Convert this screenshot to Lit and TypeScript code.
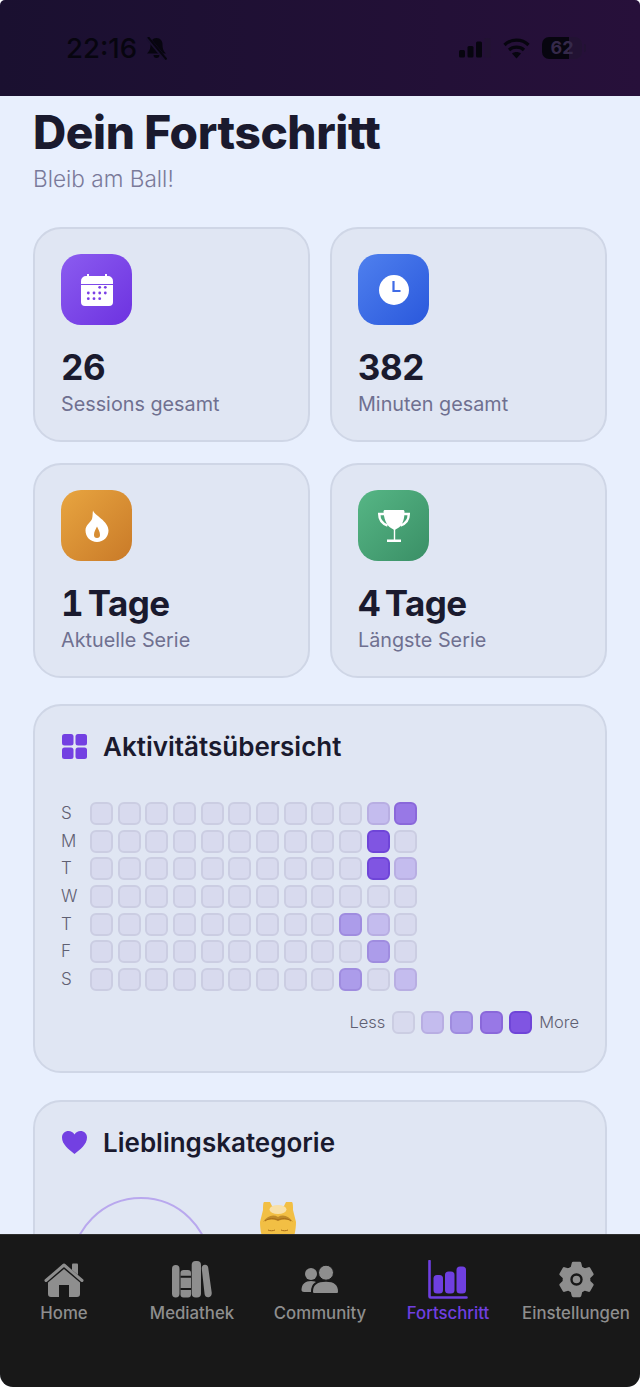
import { LitElement, html, css, svg } from "lit";
import { customElement } from "lit/decorators.js";

// levels per weekday row, 12 columns
const HEAT: [string, number[]][] = [
  ["S", [0, 0, 0, 0, 0, 0, 0, 0, 0, 0, 1, 3]],
  ["M", [0, 0, 0, 0, 0, 0, 0, 0, 0, 0, 4, 0]],
  ["T", [0, 0, 0, 0, 0, 0, 0, 0, 0, 0, 4, 1]],
  ["W", [0, 0, 0, 0, 0, 0, 0, 0, 0, 0, 0, 0]],
  ["T", [0, 0, 0, 0, 0, 0, 0, 0, 0, 2, 1, 0]],
  ["F", [0, 0, 0, 0, 0, 0, 0, 0, 0, 0, 2, 0]],
  ["S", [0, 0, 0, 0, 0, 0, 0, 0, 0, 2, 0, 1]],
];

const gear = () => {
  const pts: string[] = [];
  for (let i = 0; i < 6; i++) {
    const a = (i * Math.PI) / 3 - Math.PI / 2;
    const at = (r: number, d: number) =>
      `${(18.5 + r * Math.cos(a + d)).toFixed(2)} ${(18.5 + r * Math.sin(a + d)).toFixed(2)}`;
    pts.push(at(12.5, -0.36), at(16.5, -0.2), at(16.5, 0.2), at(12.5, 0.36));
  }
  return `M${pts.join("L")}Z`;
};

const ICONS = {
  calendar: svg`<path d="M6 0h2v2h16V0h2v2h1a5 5 0 0 1 5 5v3H0V7a5 5 0 0 1 5-5h1z" fill="#fff"/><path d="M0 11h32v17a4 4 0 0 1-4 4H4a4 4 0 0 1-4-4z" fill="#fff"/><g fill="#7a3fe6"><circle cx="18.700" cy="13.300" r="1.400"/><circle cx="24.300" cy="13.300" r="1.400"/><circle cx="7.300" cy="19" r="1.400"/><circle cx="13" cy="19" r="1.400"/><circle cx="18.700" cy="19" r="1.400"/><circle cx="24.300" cy="19" r="1.400"/><circle cx="7.300" cy="24.700" r="1.400"/><circle cx="13" cy="24.700" r="1.400"/><circle cx="18.700" cy="24.700" r="1.400"/></g>`,
  clock: svg`<circle cx="16" cy="16" r="15" fill="#fff"/><path d="M15.500 7v10h7" fill="none" stroke="#3f6be6" stroke-width="2.200"/>`,
  flame: svg`<path fill-rule="evenodd" d="M12 .5C13 5 27.500 11 27.500 20.500 27.500 27 22.500 32 16 32S4.500 27 4.500 20.500C4.500 15 9 13 11 9 11.800 6.500 11.500 3 12 .5zM16 16.500c-1.500 3-3 5.500-3 8.500a3 3 0 0 0 6 0c0-3-1.500-5.500-3-8.500z" fill="#fff"/>`,
  trophy: svg`<path d="M7 0h18c.8 0 1.500.7 1.500 1.500 0 7-1.500 12.500-5 15.500-2 1.500-3.800 2-4.300 3v9.500H23V32H9v-2.500h6.800V20c-.5-1-2.300-1.500-4.300-3C8 14 6 8.500 5.500 1.500 5.500.7 6.200 0 7 0z" fill="#fff"/><path d="M6 4H1.200c0 5 2.500 9.500 8.300 11.500M26 4h4.800c0 5-2.500 9.500-8.300 11.500" fill="none" stroke="#fff" stroke-width="2.400"/>`,
};

const STATS = [
  { value: "26", label: "Sessions gesamt", tone: "purple", icon: ICONS.calendar },
  { value: "382", label: "Minuten gesamt", tone: "blue", icon: ICONS.clock },
  { value: "1 Tage", label: "Aktuelle Serie", tone: "orange", icon: ICONS.flame },
  { value: "4 Tage", label: "Längste Serie", tone: "green", icon: ICONS.trophy },
];

const NAV = [
  {
    label: "Home",
    w: 40,
    h: 37,
    icon: svg`<path d="M28 3.500a1 1 0 0 1 1-1h4a1 1 0 0 1 1 1V14l-6-5z" fill="currentColor"/><path d="M2 19.500 20 4l18 15.500" fill="none" stroke="currentColor" stroke-width="3" stroke-linecap="round" stroke-linejoin="round"/><path d="M4 21.500 20 8l16 13.500V33a3 3 0 0 1-3 3h-8V24H15v12H7a3 3 0 0 1-3-3z" fill="currentColor"/>`,
  },
  {
    label: "Mediathek",
    w: 40,
    h: 37,
    icon: svg`<rect x="0" y="4" width="7.500" height="32.500" rx="3.700" fill="currentColor"/><rect x="8.500" y="9" width="10.500" height="27.500" rx="3" fill="currentColor"/><path d="M8.500 15.700h10.500M8.500 28h10.500" stroke="#181818" stroke-width="2"/><rect x="19.700" y="0" width="9.300" height="36.500" rx="4" fill="currentColor"/><path d="M29.800 8c-.3-2.500 1-4 3-4.200 1.800-.2 3 .8 3.400 2.800l3.500 25c.3 2.300-1 4.300-3 4.700-2.200.4-3.700-1-4.100-3z" fill="currentColor"/>`,
  },
  {
    label: "Community",
    w: 39,
    h: 29,
    icon: svg`<circle cx="10" cy="9" r="6" fill="currentColor"/><path d="M.5 25c0-6 4-9 9.500-9s9.500 3 9.500 9c0 1-.5 2-2 2H3c-1.500 0-2.500-1-2.500-2z" fill="currentColor"/><path d="M11 26.500c0-7.500 6-10.700 14-10.700s13 3.200 13 10.700c0 1.500-1 2.500-2 2.500H13c-1 0-2-1-2-2.500z" fill="currentColor" stroke="#181818" stroke-width="2"/><circle cx="25" cy="7.700" r="7.500" fill="currentColor" stroke="#181818" stroke-width="1"/>`,
  },
  {
    label: "Fortschritt",
    w: 40,
    h: 39,
    active: true,
    icon: svg`<path d="M1.500 1v35.500a1 1 0 0 0 1 1h36" fill="none" stroke="currentColor" stroke-width="2.600" stroke-linecap="round"/><rect x="5.500" y="15" width="9.500" height="18.500" rx="3.500" fill="currentColor"/><rect x="17" y="11.500" width="9.500" height="22" rx="3.500" fill="currentColor"/><rect x="28.500" y="6.500" width="9.500" height="27" rx="3.500" fill="currentColor"/>`,
  },
  {
    label: "Einstellungen",
    w: 37,
    h: 37,
    icon: svg`<path d="${gear()}" fill="currentColor" stroke="currentColor" stroke-width="3" stroke-linejoin="round"/><circle cx="18.500" cy="18.500" r="5" fill="currentColor" stroke="#181818" stroke-width="2.400"/>`,
  },
];

@customElement("app-root")
export class AppRoot extends LitElement {
  static styles = css`
    :host {
      display: flex;
      flex-direction: column;
      height: 1387px;
      overflow: hidden;
      background: #e8effd;
      border-radius: 5px 5px 13px 13px;
      font-family: Inter, "Liberation Sans", sans-serif;
      color: #1a1a2e;
    }

    .status {
      flex: none;
      height: 96px;
      box-sizing: border-box;
      padding: 0 54px 0 66px;
      display: flex;
      align-items: center;
      justify-content: space-between;
      background: linear-gradient(90deg, #1a1030, #27103a);
      color: #07050f;
    }
    .status-side {
      display: flex;
      align-items: center;
      gap: 9px;
    }
    .status-right {
      gap: 12px;
    }
    .time {
      font-size: 27.5px;
      font-weight: 500;
    }
    .battery {
      width: 40px;
      height: 22px;
      border-radius: 7px;
      background: linear-gradient(90deg, #07050f 68%, #221233 68%);
      font-size: 18px;
      font-weight: 700;
      line-height: 22px;
      text-align: center;
      color: #35294a;
    }
    .battery-nub {
      width: 2px;
      height: 8px;
      margin-left: -10px;
      border-radius: 0 2px 2px 0;
      background: #221233;
    }

    main {
      flex: 1;
      min-height: 0;
      overflow: hidden;
      padding: 10px 33px 0;
    }
    h1 {
      margin: 0;
      font-size: 46px;
      line-height: 52px;
      font-weight: 800;
      letter-spacing: -0.4px;
    }
    .sub {
      margin: 6px 0 0;
      font-size: 22.6px;
      line-height: 30px;
      font-weight: 300;
      color: #7a7a9a;
    }

    .stats {
      display: grid;
      grid-template-columns: 1fr 1fr;
      gap: 21px 20px;
      margin-top: 33px;
    }
    .card {
      box-sizing: border-box;
      border: 2px solid #cfd6e6;
      border-radius: 28px;
      background: #e0e6f3;
    }
    .stat {
      height: 215px;
      padding: 25px 26px;
    }
    .stat-icon {
      width: 71px;
      height: 71px;
      border-radius: 20px;
      display: flex;
      align-items: center;
      justify-content: center;
    }
    .stat-icon svg {
      width: 32px;
      height: 32px;
    }
    .purple {
      background: linear-gradient(135deg, #8b5cf0, #6d32e0);
    }
    .blue {
      background: linear-gradient(135deg, #4f80ee, #2a58dc);
    }
    .orange {
      background: linear-gradient(135deg, #e8a540, #c97a28);
    }
    .green {
      background: linear-gradient(135deg, #56b685, #3a8f66);
    }
    .value {
      margin-top: 20px;
      font-size: 35px;
      line-height: 44px;
      font-weight: 700;
      font-feature-settings: "tnum";
      letter-spacing: -0.6px;
      word-spacing: -4px;
    }
    .label {
      margin-top: 3px;
      font-size: 19.8px;
      line-height: 24px;
      color: #6f7090;
    }

    .panel {
      margin-top: 27px;
      padding: 24px 26px;
    }
    .activity {
      height: 369px;
      margin-top: 26px;
    }
    .panel-head {
      display: flex;
      align-items: center;
      gap: 15px;
      height: 32px;
      font-size: 26px;
      font-weight: 600;
    }
    .panel-head svg {
      width: 27px;
      height: 27px;
    }
    .heat {
      margin-top: 40px;
      display: grid;
      grid-template-columns: 24.3px repeat(12, 23px);
      grid-auto-rows: 23px;
      gap: 4.67px;
    }
    .day {
      font-size: 17px;
      font-weight: 300;
      line-height: 23px;
      color: #5f6072;
    }
    .cell {
      box-sizing: border-box;
      width: 23px;
      height: 23px;
      border-radius: 6px;
      border: 2px solid;
    }
    .l0 {
      background: #d8daee;
      border-color: #cbcde2;
    }
    .l1 {
      background: #c4bcee;
      border-color: #b8aee2;
    }
    .l2 {
      background: #ac9cea;
      border-color: #9f8cdf;
    }
    .l3 {
      background: #9878e6;
      border-color: #8a68da;
    }
    .l4 {
      background: #8055e2;
      border-color: #6f45d8;
    }
    .legend {
      margin-top: 20px;
      display: flex;
      justify-content: flex-end;
      align-items: center;
      gap: 6.3px;
      font-size: 16.5px;
      font-weight: 300;
      color: #5f6072;
    }
    .legend span:last-child {
      margin-left: 1px;
    }

    .favorite {
      height: 260px;
    }
    .favorite-body {
      margin-top: 39px;
      margin-left: 10px;
      display: flex;
      align-items: flex-start;
      gap: 49px;
    }
    .donut {
      flex: none;
      width: 140px;
      height: 140px;
      box-sizing: border-box;
      border: 2px solid #b9a8ee;
      border-radius: 50%;
    }
    .person {
      flex: none;
      width: 36px;
      height: 60px;
      margin-top: 5px;
    }

    nav {
      flex: none;
      height: 153px;
      box-sizing: border-box;
      padding-top: 24px;
      display: grid;
      grid-template-columns: repeat(5, 1fr);
      background: #181818;
      border-top: 1px solid #2e2e2e;
    }
    .tab {
      display: flex;
      flex-direction: column;
      align-items: center;
      font-size: 16.8px;
      font-weight: 500;
      color: #8e8e8e;
      white-space: nowrap;
    }
    .tab.active {
      color: #6f3fe0;
    }
    .tab-icon {
      height: 40px;
      display: flex;
      align-items: center;
      justify-content: center;
    }
    .tab-text {
      margin-top: 3px;
      line-height: 22px;
    }
  `;

  render() {
    return html`
      <div class="status">
        <div class="status-side">
          <span class="time">22:16</span>
          <svg width="21" height="23" viewBox="0 0 21 23">
            <path d="M10.500 1c4 0 6 3 6 6.500 0 5 1.500 7 3.500 9H1c2-2 3.500-4 3.500-9C4.500 4 6.500 1 10.500 1zM7.500 18h6a3 3 0 0 1-6 0z" fill="currentColor" />
            <path d="M1 0l19 23" stroke="#1a1030" stroke-width="4" />
            <path d="M2 0l18.500 22.500" stroke="currentColor" stroke-width="2" />
          </svg>
        </div>
        <div class="status-side status-right">
          <svg width="32" height="20" viewBox="0 0 32 20">
            <rect x="0" y="12" width="6" height="7.500" rx="1.500" fill="currentColor" />
            <rect x="8.500" y="8" width="6" height="11.500" rx="1.500" fill="currentColor" />
            <rect x="17" y="3.500" width="6" height="16" rx="1.500" fill="currentColor" />
            <rect x="25.500" y="0" width="6" height="19.500" rx="1.500" fill="#221233" />
          </svg>
          <svg width="27" height="21" viewBox="0 0 27 21" fill="none" stroke="currentColor" stroke-width="3.200">
            <path d="M1.500 7c6.500-6.500 17.500-6.500 24 0" />
            <path d="M6 12c4-3.800 11-3.800 15 0" />
            <path d="M13.500 20.500l-4.500-5c2.500-2 6.500-2 9 0z" fill="currentColor" stroke="none" />
          </svg>
          <div class="battery">62</div>
          <div class="battery-nub"></div>
        </div>
      </div>

      <main>
        <h1>Dein Fortschritt</h1>
        <p class="sub">Bleib am Ball!</p>

        <div class="stats">
          ${STATS.map(
            (s) => html`
              <div class="card stat">
                <div class="stat-icon ${s.tone}">
                  <svg viewBox="0 0 32 32">${s.icon}</svg>
                </div>
                <div class="value">${s.value}</div>
                <div class="label">${s.label}</div>
              </div>
            `
          )}
        </div>

        <div class="card panel activity">
          <div class="panel-head">
            <svg viewBox="0 0 27 27" fill="#7340e2">
              <rect x="1" y="1" width="11.500" height="11.500" rx="2.500" />
              <rect x="14.500" y="1" width="11.500" height="11.500" rx="2.500" />
              <rect x="1" y="14.500" width="11.500" height="11.500" rx="2.500" />
              <rect x="14.500" y="14.500" width="11.500" height="11.500" rx="2.500" />
            </svg>
            Aktivitätsübersicht
          </div>
          <div class="heat">
            ${HEAT.map(
              ([day, levels]) => html`
                <span class="day">${day}</span>
                ${levels.map((l) => html`<div class="cell l${l}"></div>`)}
              `
            )}
          </div>
          <div class="legend">
            <span>Less</span>
            ${[0, 1, 2, 3, 4].map((l) => html`<div class="cell l${l}"></div>`)}
            <span>More</span>
          </div>
        </div>

        <div class="card panel favorite">
          <div class="panel-head">
            <svg viewBox="0 0 27 27" fill="#7340e2">
              <path d="M13.500 25C8 20.500 1 15.500 1 8.500 1 4.500 4 2 7.500 2c2.500 0 4.800 1.300 6 3.500C14.700 3.300 17 2 19.500 2 23 2 26 4.500 26 8.500c0 7-7 12-12.500 16.500z" />
            </svg>
            Lieblingskategorie
          </div>
          <div class="favorite-body">
            <div class="donut"></div>
            <svg class="person" viewBox="0 0 36 60">
              <path d="M3 8C3 4 3 1 4 0h6l2 4h12l2-4h6c1 1 1 4 1 8l2 8 1 4c0 14-6 32-18 32S0 34 0 20l1-4z" fill="#f2bf44" />
              <ellipse cx="18" cy="7.500" rx="8.500" ry="4.500" fill="#f8e0a8" />
              <path d="M3 20c4-6 10-8 15-5 5-3 11-1 15 5-5-3-10-3-15-1-5-2-10-2-15 1z" fill="#c08a28" />
              <path d="M5 19c4-3 9-3 13-1M31 19c-4-3-9-3-13-1" stroke="#a86c18" stroke-width="1" fill="none" />
              <path d="M8 28c2 1 5 1 7 0M21 28c2 1 5 1 7 0" stroke="#a86c18" stroke-width="1" fill="none" />
            </svg>
          </div>
        </div>
      </main>

      <nav>
        ${NAV.map(
          (n) => html`
            <div class="tab ${n.active ? "active" : ""}">
              <div class="tab-icon">
                <svg width=${n.w} height=${n.h} viewBox="0 0 ${n.w} ${n.h}">${n.icon}</svg>
              </div>
              <span class="tab-text">${n.label}</span>
            </div>
          `
        )}
      </nav>
    `;
  }
}
